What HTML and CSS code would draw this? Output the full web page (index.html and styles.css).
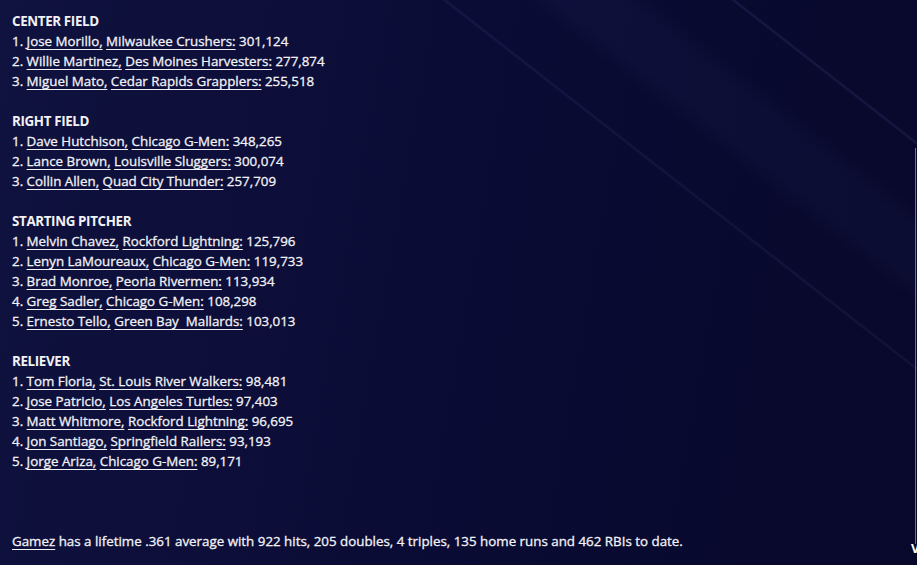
FILE: index.html
```html
<!DOCTYPE html>
<html>
<head>
<meta charset="utf-8">
<link rel="stylesheet" href="styles.css">
</head>
<body>
<div class="page">
  <section class="group">
    <div class="head">CENTER FIELD</div>
    <div class="row">1. <a>Jose Morillo,</a> <a>Milwaukee Crushers:</a> 301,124</div>
    <div class="row">2. <a>Willie Martinez,</a> <a>Des Moines Harvesters:</a> 277,874</div>
    <div class="row">3. <a>Miguel Mato,</a> <a>Cedar Rapids Grapplers:</a> 255,518</div>
  </section>
  <section class="group">
    <div class="head">RIGHT FIELD</div>
    <div class="row">1. <a>Dave Hutchison,</a> <a>Chicago G-Men:</a> 348,265</div>
    <div class="row">2. <a>Lance Brown,</a> <a>Louisville Sluggers:</a> 300,074</div>
    <div class="row">3. <a>Collin Allen,</a> <a>Quad City Thunder:</a> 257,709</div>
  </section>
  <section class="group">
    <div class="head">STARTING PITCHER</div>
    <div class="row">1. <a>Melvin Chavez,</a> <a>Rockford Lightning:</a> 125,796</div>
    <div class="row">2. <a>Lenyn LaMoureaux,</a> <a>Chicago G-Men:</a> 119,733</div>
    <div class="row">3. <a>Brad Monroe,</a> <a>Peoria Rivermen:</a> 113,934</div>
    <div class="row">4. <a>Greg Sadler,</a> <a>Chicago G-Men:</a> 108,298</div>
    <div class="row">5. <a>Ernesto Tello,</a> <a>Green Bay&nbsp; Mallards:</a> 103,013</div>
  </section>
  <section class="group">
    <div class="head">RELIEVER</div>
    <div class="row">1. <a>Tom Floria,</a> <a>St. Louis River Walkers:</a> 98,481</div>
    <div class="row">2. <a>Jose Patricio,</a> <a>Los Angeles Turtles:</a> 97,403</div>
    <div class="row">3. <a>Matt Whitmore,</a> <a>Rockford Lightning:</a> 96,695</div>
    <div class="row">4. <a>Jon Santiago,</a> <a>Springfield Railers:</a> 93,193</div>
    <div class="row">5. <a>Jorge Ariza,</a> <a>Chicago G-Men:</a> 89,171</div>
  </section>
  <p class="foot"><a>Gamez</a> has a lifetime .361 average with 922 hits, 205 doubles, 4 triples, 135 home runs and 462 RBIs to date.</p>
</div>
<div class="scrollbar"></div>
<div class="corner">V</div>
</body>
</html>
```
FILE: styles.css
```css
html, body {
  margin: 0;
  padding: 0;
  width: 917px;
  height: 565px;
  overflow: hidden;
}
body {
  background-color: #090a30;
  background-image:
    linear-gradient(38deg, transparent 71%, rgba(120,130,220,0.10) 71.2%, transparent 71.4%),
    linear-gradient(38deg, transparent 88.6%, rgba(130,140,230,0.13) 88.8%, transparent 89%),
    linear-gradient(38deg, transparent 76%, rgba(100,110,200,0.045) 78%, rgba(100,110,200,0.045) 82%, transparent 84%),
    linear-gradient(100deg, #10123f 0%, #0b0c36 45%, #07082a 100%);
  font-family: "Open Sans", "Noto Sans", sans-serif;
  color: #f2f2f6;
  position: relative;
}
.page {
  padding: 11px 0 0 12px;
  display: flex;
  flex-direction: column;
  gap: 20px;
  font-size: 13.35px;
  line-height: 20px;
  -webkit-text-stroke: 0.3px currentColor;
}
.head {
  font-weight: 700;
  letter-spacing: -0.35px;
  -webkit-text-stroke: 0;
}
.row {
  white-space: nowrap;
}
a {
  color: inherit;
  text-decoration: underline;
  text-underline-offset: 3px;
  text-decoration-thickness: 1px;
}
.foot {
  margin: 40px 0 0;
  white-space: nowrap;
}
.scrollbar {
  position: absolute;
  right: 1px;
  top: 148px;
  width: 1px;
  height: 396px;
  background: #6c6f95;
}
.corner {
  position: absolute;
  left: 911px;
  top: 538px;
  font-size: 13px;
  line-height: 20px;
  font-weight: 700;
  color: #fff;
}
```
